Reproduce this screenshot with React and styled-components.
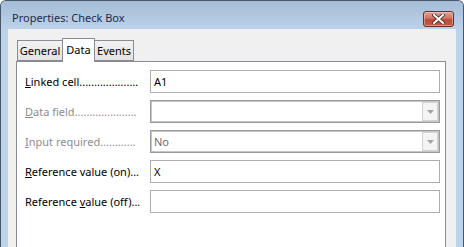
import styled, { createGlobalStyle } from "styled-components";

const Global = createGlobalStyle`
  html, body {
    margin: 0;
    padding: 0;
    background: #ffffff;
  }
  body {
    font-family: "Noto Sans", "Open Sans", sans-serif;
    font-size: 11px;
  }
`;

const Window = styled.div`
  width: 464px;
  height: 247px;
  box-sizing: border-box;
  display: flex;
  flex-direction: column;
  overflow: hidden;
  border: 1px solid #48566a;
  border-bottom: none;
  border-radius: 6px 6px 0 0;
  background: #bcd3ea;
`;

const TitleBar = styled.div`
  height: 28px;
  flex: none;
  display: flex;
  align-items: center;
  justify-content: space-between;
  padding: 0 9px 0 11px;
  background: linear-gradient(#a5bcd6, #bcd2ea);
`;

const Title = styled.span`
  color: #1c2a48;
  font-size: 11px;
  margin-top: 5px;
`;

const CloseButton = styled.div`
  width: 29px;
  height: 14px;
  margin-top: 8px;
  border: 1px solid #6a2b24;
  border-radius: 3px;
  display: flex;
  align-items: center;
  justify-content: center;
  background: linear-gradient(#e2a396 0%, #cf7260 45%, #bd4a35 55%, #c45a42 100%);
  box-shadow: inset 0 0 0 1px rgba(255, 220, 210, 0.45);
`;

const Client = styled.div`
  flex: 1;
  margin: 0 7px;
  background: #f0f0f0;
  padding: 9px 10px 0 8px;
  overflow: hidden;
`;

const TabRow = styled.div`
  display: flex;
  align-items: flex-end;
  height: 23px;
  padding-left: 1px;
  position: relative;
  z-index: 1;
`;

const Tab = styled.div`
  box-sizing: border-box;
  width: ${(p) => p.$w}px;
  height: ${(p) => (p.$active ? 24 : 21)}px;
  padding-bottom: ${(p) => (p.$active ? 3 : 0)}px;
  margin-right: -1px;
  margin-bottom: ${(p) => (p.$active ? -1 : 0)}px;
  border: 1px solid #898c95;
  border-bottom: ${(p) => (p.$active ? "none" : "1px solid #898c95")};
  background: ${(p) =>
    p.$active ? "#ffffff" : "linear-gradient(#f2f2f2, #e3e3e3)"};
  color: #000;
  font-size: 11px;
  white-space: nowrap;
  display: flex;
  align-items: center;
  justify-content: center;
  position: relative;
  z-index: ${(p) => (p.$active ? 2 : 1)};
`;

const Page = styled.div`
  width: 430px;
  height: 200px;
  box-sizing: border-box;
  border: 1px solid #898c95;
  background: #ffffff;
  padding: 8px 0 0 8px;
  display: flex;
  flex-direction: column;
  gap: 7px;
`;

const Row = styled.div`
  display: flex;
  align-items: center;
  height: 23px;
`;

const Label = styled.div`
  width: 125px;
  flex: none;
  white-space: nowrap;
  font-size: 11px;
  color: ${(p) => (p.$disabled ? "#8d8d8d" : "#000000")};
`;

const Field = styled.div`
  box-sizing: border-box;
  width: 290px;
  height: 23px;
  display: flex;
  align-items: center;
  border: 1px solid ${(p) => (p.$disabled ? "#979aa0" : "#abadb3")};
  box-shadow: ${(p) => (p.$disabled ? "inset 0 0 0 1px #c6c6c6" : "none")};
  background: #ffffff;
  padding-left: 3px;
  font-size: 11px;
  color: ${(p) => (p.$disabled ? "#6d6d6d" : "#000000")};
`;

const FieldText = styled.span`
  flex: 1;
`;

const DropButton = styled.div`
  width: 16px;
  height: 19px;
  margin-right: 1px;
  box-sizing: border-box;
  border: 1px solid #d2d2d2;
  background: #f4f4f4;
  display: flex;
  align-items: center;
  justify-content: center;
`;

const Arrow = () => (
  <svg width="7" height="4" viewBox="0 0 7 4">
    <path d="M0 0H7L3.5 4Z" fill="#a3a3a3" />
  </svg>
);

const CloseGlyph = () => (
  <svg width="13" height="10" viewBox="0 0 13 10">
    <path
      d="M2 1L11 9M11 1L2 9"
      stroke="#4a2a2a"
      strokeWidth="3.6"
      strokeLinecap="square"
    />
    <path
      d="M2 1L11 9M11 1L2 9"
      stroke="#ffffff"
      strokeWidth="2"
      strokeLinecap="square"
    />
  </svg>
);

const rows = [
  { pre: "", key: "L", post: "inked cell", dots: 20, value: "A1" },
  { pre: "", key: "D", post: "ata field", dots: 21, disabled: true, combo: true },
  { pre: "", key: "I", post: "nput required", dots: 12, disabled: true, combo: true, value: "No" },
  { pre: "", key: "R", post: "eference value (on)", dots: 3, value: "X" },
  { pre: "Reference ", key: "v", post: "alue (off)", dots: 3 },
];

export default function App() {
  return (
    <>
      <Global />
      <Window>
        <TitleBar>
          <Title>Properties: Check Box</Title>
          <CloseButton>
            <CloseGlyph />
          </CloseButton>
        </TitleBar>
        <Client>
          <TabRow>
            <Tab $w={46}>General</Tab>
            <Tab $w={33} $active>Data</Tab>
            <Tab $w={40}>Events</Tab>
          </TabRow>
          <Page>
            {rows.map((r) => (
              <Row key={r.key}>
                <Label $disabled={r.disabled}>
                  {r.pre}
                  <u>{r.key}</u>
                  {r.post}
                  {".".repeat(r.dots)}
                </Label>
                <Field $disabled={r.disabled}>
                  <FieldText>{r.value}</FieldText>
                  {r.combo && (
                    <DropButton>
                      <Arrow />
                    </DropButton>
                  )}
                </Field>
              </Row>
            ))}
          </Page>
        </Client>
      </Window>
    </>
  );
}
